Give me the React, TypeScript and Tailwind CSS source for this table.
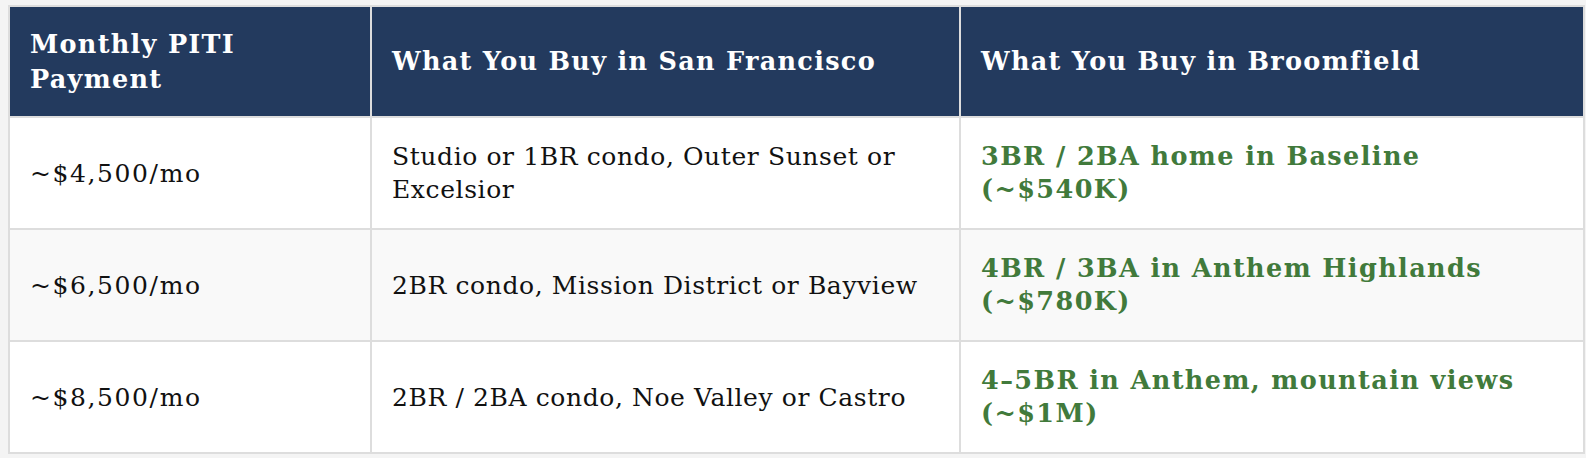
import React from "react";

const rows = [
  {
    pay: "~$4,500/mo",
    sf: ["Studio or 1BR condo, Outer Sunset or", "Excelsior"],
    bf: ["3BR / 2BA home in Baseline", "(~$540K)"],
  },
  {
    pay: "~$6,500/mo",
    sf: ["2BR condo, Mission District or Bayview"],
    bf: ["4BR / 3BA in Anthem Highlands", "(~$780K)"],
  },
  {
    pay: "~$8,500/mo",
    sf: ["2BR / 2BA condo, Noe Valley or Castro"],
    bf: ["4\u20135BR in Anthem, mountain views", "(~$1M)"],
  },
];

function Lines({ lines }: { lines: string[] }) {
  return (
    <>
      {lines.map((l, i) => (
        <React.Fragment key={i}>
          {i > 0 && <br />}
          {l}
        </React.Fragment>
      ))}
    </>
  );
}

export default function App() {
  return (
    <div className="min-h-[458px] bg-[#f4f4f4] pl-[8px] pt-[5px]" style={{ fontFamily: '"DejaVu Serif", Georgia, serif' }}>
      <table className="w-[1575px] border-collapse border-2 border-[#dddddd] table-fixed">
        <colgroup>
          <col className="w-[362px]" />
          <col className="w-[589px]" />
          <col className="w-[624px]" />
        </colgroup>
        <thead>
          <tr className="h-[111px] bg-[#233a5e] text-white">
            <th className="border-2 border-[#dddddd] pl-[20px] pr-4 text-left align-middle text-[25.5px] font-bold leading-[35px] tracking-[1.3px]">
              Monthly PITI
              <br />
              Payment
            </th>
            <th className="border-2 border-[#dddddd] pl-[20px] pr-4 text-left align-middle text-[25.5px] font-bold leading-[35px] tracking-[1.3px]">
              What You Buy in San Francisco
            </th>
            <th className="border-2 border-[#dddddd] pl-[20px] pr-4 text-left align-middle text-[25.5px] font-bold leading-[35px] tracking-[1.3px]">
              What You Buy in Broomfield
            </th>
          </tr>
        </thead>
        <tbody>
          {rows.map((r, i) => (
            <tr key={i} className={`h-[112px] ${i === 1 ? "bg-[#f9f9f9]" : "bg-white"}`}>
              <td className="border-2 border-[#dddddd] pl-[20px] pr-4 align-middle text-[25px] leading-[33px] tracking-[1.6px] text-[#111111]">
                {r.pay}
              </td>
              <td className="border-2 border-[#dddddd] pl-[20px] pr-4 align-middle text-[25px] leading-[33px] tracking-[0.6px] text-[#111111]">
                <Lines lines={r.sf} />
              </td>
              <td className="border-2 border-[#dddddd] pl-[20px] pr-4 align-middle text-[25.5px] font-bold leading-[33px] tracking-[1.4px] text-[#417a3b]">
                <Lines lines={r.bf} />
              </td>
            </tr>
          ))}
        </tbody>
      </table>
    </div>
  );
}
